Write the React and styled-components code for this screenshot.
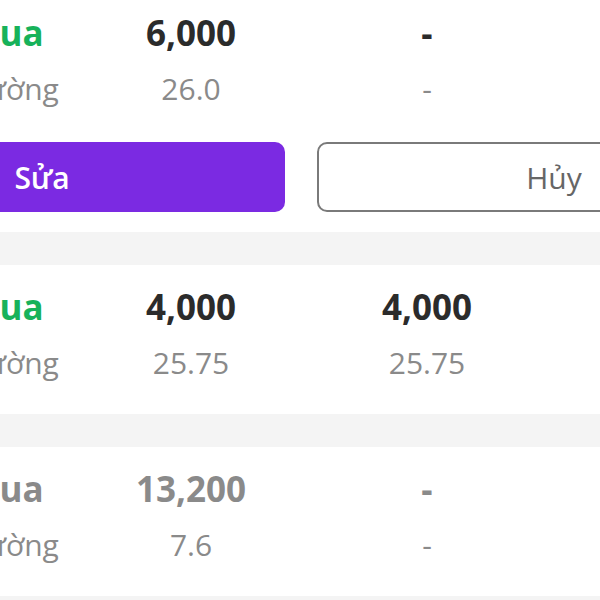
import React from "react";
import styled, { createGlobalStyle } from "styled-components";

const Global = createGlobalStyle`
  html, body { margin: 0; padding: 0; background: #ffffff; overflow: hidden; }
  body { font-family: "Open Sans", "Noto Sans", sans-serif; width: 600px; height: 600px; }
`;

const Page = styled.div`
  margin: -9px 0 0 -210px;
  width: 1022px;
  display: flex;
  flex-direction: column;
`;

const Section = styled.section`
  background: #fff;
  padding: 20px 0 ${(p) => (p.$withActions ? 20 : 31)}px;
  display: flex;
  flex-direction: column;
`;

const Divider = styled.div`
  height: 33px;
  background: #f4f4f4;
`;

const Row = styled.div`
  display: grid;
  grid-template-columns: 180px 192px 280px;
  padding-left: 125px;
  text-align: center;
  white-space: nowrap;
  margin-top: ${(p) => (p.$second ? 14 : 0)}px;
  font-size: ${(p) => (p.$second ? 30 : 35)}px;
  line-height: ${(p) => (p.$second ? 40 : 44)}px;
  font-weight: ${(p) => (p.$second ? 400 : 700)};
`;

const Cell = styled.div`
  color: ${(p) => p.$color || "#8a8a8a"};
`;

const Actions = styled.div`
  display: flex;
  gap: 32px;
  padding: 0 17px;
  margin-top: 33px;
`;

const Button = styled.button`
  flex: 0 0 478px;
  height: 70px;
  border-radius: 10px;
  font-family: "Open Sans", "Noto Sans", sans-serif;
  font-size: 30px;
  box-sizing: border-box;
  cursor: pointer;
  padding: ${(p) => (p.$primary ? "0 8px 0 0" : "0 4px 0 0")};
  background: ${(p) => (p.$primary ? "#7b2ae2" : "#ffffff")};
  color: ${(p) => (p.$primary ? "#ffffff" : "#666666")};
  border: ${(p) => (p.$primary ? "none" : "2px solid #7a7a7a")};
  font-weight: ${(p) => (p.$primary ? 600 : 400)};
`;

const orders = [
  { side: "Mua", active: true, qty: "6,000", price: "26.0", mQty: "-", mPrice: "-", actions: true },
  { side: "Mua", active: true, qty: "4,000", price: "25.75", mQty: "4,000", mPrice: "25.75" },
  { side: "Mua", active: false, qty: "13,200", price: "7.6", mQty: "-", mPrice: "-" },
];

export default function App() {
  return (
    <>
      <Global />
      <Page>
        {orders.map((o, i) => (
          <React.Fragment key={i}>
            {i > 0 && <Divider />}
            <Section $withActions={o.actions}>
              <Row>
                <Cell $color={o.active ? "#17b25a" : "#8a8a8a"}>{o.side}</Cell>
                <Cell $color={o.active ? "#2b2b2b" : "#8a8a8a"}>{o.qty}</Cell>
                <Cell $color={o.active ? "#2b2b2b" : "#8a8a8a"}>{o.mQty}</Cell>
              </Row>
              <Row $second>
                <Cell>Thường</Cell>
                <Cell>{o.price}</Cell>
                <Cell>{o.mPrice}</Cell>
              </Row>
              {o.actions && (
                <Actions>
                  <Button $primary>Sửa</Button>
                  <Button>Hủy</Button>
                </Actions>
              )}
            </Section>
          </React.Fragment>
        ))}
        <Divider />
      </Page>
    </>
  );
}
